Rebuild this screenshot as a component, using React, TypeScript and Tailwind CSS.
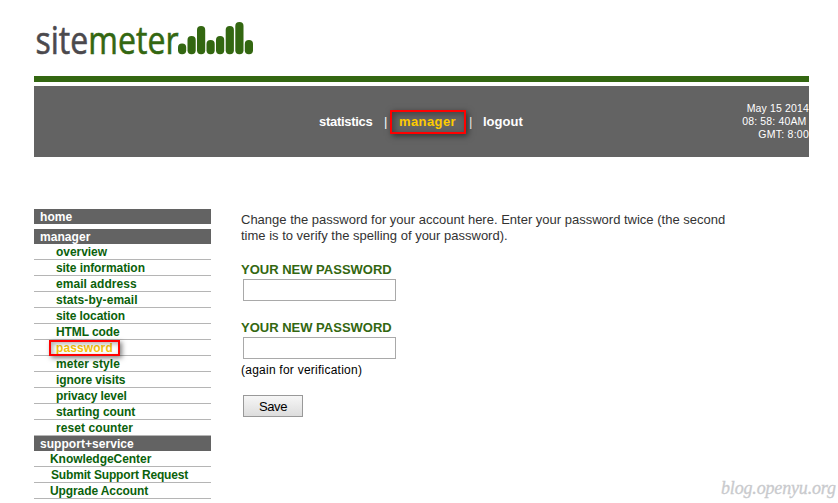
const BARS = [
  { x: 144, top: 25.5 },
  { x: 153.5, top: 18 },
  { x: 163, top: 8 },
  { x: 172.5, top: 22 },
  { x: 182, top: 18 },
  { x: 191.7, top: 8 },
  { x: 201.3, top: 4 },
  { x: 210.8, top: 22 },
];

function Logo() {
  return (
    <svg className="block overflow-visible" width="224" height="46" viewBox="0 0 224 46">
      <text
        x="1.5"
        y="35.7"
        textLength="143"
        lengthAdjust="spacingAndGlyphs"
        fontFamily="'Open Sans', 'Noto Sans', sans-serif"
        fontSize="37.5"
        strokeWidth="0.6"
      >
        <tspan fill="#4b494d" stroke="#4b494d">site</tspan>
        <tspan fill="#336711" stroke="#336711">meter</tspan>
      </text>
      {BARS.map((b) => (
        <rect key={b.x} x={b.x} y={b.top} width="8.2" height={36.2 - b.top} rx="4" fill="#336711" />
      ))}
    </svg>
  );
}

const MANAGER_LINKS = [
  { label: "overview", cls: "tracking-[-0.05px]" },
  { label: "site information", cls: "tracking-[-0.07px]" },
  { label: "email address", cls: "tracking-[0.05px]" },
  { label: "stats-by-email", cls: "tracking-[0.07px]" },
  { label: "site location", cls: "tracking-[-0.08px]" },
  { label: "HTML code", cls: "tracking-[-0.1px]" },
  { label: "password", cls: "tracking-[0.1px]", active: true },
  { label: "meter style", cls: "tracking-[0.05px]" },
  { label: "ignore visits", cls: "tracking-[-0.1px]" },
  { label: "privacy level", cls: "tracking-[-0.1px]" },
  { label: "starting count", cls: "tracking-[-0.05px]" },
  { label: "reset counter", cls: "tracking-[0.08px]" },
];

const SUPPORT_LINKS = [
  { label: "KnowledgeCenter", cls: "pl-4 tracking-[-0.05px]" },
  { label: "Submit Support Request", cls: "pl-[17px] tracking-[-0.16px]" },
  { label: "Upgrade Account", cls: "pl-4 tracking-[-0.1px]" },
];

function SectionTitle({ children }: { children: string }) {
  return (
    <h2 className="h-[15px] bg-[#636363] pl-1.5 text-[12px] leading-4 font-bold tracking-[0.05px] text-white">
      {children}
    </h2>
  );
}

export default function App() {
  return (
    <div className="flex h-[503px] w-[838px] flex-col overflow-hidden bg-white pl-[34px] font-['Liberation_Sans',Arial,sans-serif] text-black">
      <header className="w-[775px]">
        <div className="h-[76px] pt-[18px]"><Logo /></div>
        <div className="mb-1 h-1.5 bg-[#336711]" />
        <div className="flex h-[71px] bg-[#636363] text-white">
          <nav className="flex flex-1 pt-7 pl-[285px] text-[13px] leading-4 font-bold">
            <a className="w-[65px] tracking-[-0.3px]">statistics</a>
            <span className="w-[15px] font-normal">|</span>
            <a className="relative w-[70px] tracking-[0.4px] text-[#ffcc00]">
              manager
              <span className="absolute -top-1 -left-[9px] h-6 w-[76px] border-2 border-[#ff0000] shadow-[2px_2px_6px_rgba(0,0,0,0.5),inset_2px_2px_6px_rgba(0,0,0,0.35)]" />
            </a>
            <span className="w-[14px] font-normal">|</span>
            <a>logout</a>
          </nav>
          <div className="pt-4 text-right text-[10.5px] leading-[13px]">
            <div className="tracking-[0.15px]">May 15 2014</div>
            <div className="pr-[2.5px] tracking-[0.15px]">08: 58: 40AM</div>
            <div className="tracking-[0.25px]">GMT: 8:00</div>
          </div>
        </div>
      </header>

      <div className="flex pt-[52px]">
        <aside className="w-[177px] shrink-0 text-[12px] font-bold text-[#0b610b]">
          <SectionTitle>home</SectionTitle>
          <div className="h-[5px]" />
          <SectionTitle>manager</SectionTitle>
          <ul>
            {MANAGER_LINKS.map((l) => (
              <li key={l.label} className="h-4 border-b border-[#b5b5b5] pl-[22px] leading-4 whitespace-nowrap">
                {l.active ? (
                  <span className="relative text-[#f4c20d]">
                    <span className={l.cls}>{l.label}</span>
                    <span className="absolute -top-px -left-[7px] h-4 w-[71px] border-2 border-[#ff0000] shadow-[2px_2px_5px_rgba(0,0,0,0.5),inset_2px_2px_5px_rgba(0,0,0,0.3)]" />
                  </span>
                ) : (
                  <span className={l.cls}>{l.label}</span>
                )}
              </li>
            ))}
          </ul>
          <SectionTitle>support+service</SectionTitle>
          <ul>
            {SUPPORT_LINKS.map((l) => (
              <li key={l.label} className="h-4 border-b border-[#b5b5b5] leading-4 whitespace-nowrap">
                <span className={l.cls}>{l.label}</span>
              </li>
            ))}
          </ul>
        </aside>

        <main className="flex flex-1 flex-col pt-[3px] pl-[30px] text-[13px] leading-4">
          <p className="whitespace-nowrap text-[#333333]">
            Change the password for your account here. Enter your password twice (the second
            <br />
            time is to verify the spelling of your password).
          </p>
          <label className="mt-[17px] h-[18px] text-[13px] leading-[18px] font-bold text-[#336711]">YOUR NEW PASSWORD</label>
          <input className="ml-0.5 h-[22px] w-[153px] border border-[#a9a9a9] bg-white" />
          <label className="mt-[18px] h-[18px] text-[13px] leading-[18px] font-bold text-[#336711]">YOUR NEW PASSWORD</label>
          <input className="ml-0.5 h-[22px] w-[153px] border border-[#a9a9a9] bg-white" />
          <div className="mt-[3px] text-[12px] tracking-[0.24px]">(again for verification)</div>
          <button className="mt-[17px] ml-0.5 h-[22px] w-[60px] border border-[#999999] bg-linear-to-b from-[#f6f6f6] to-[#dddddd] text-[13px] leading-[21px] tracking-[-0.4px]">
            Save
          </button>
          <div className="mt-[63px] self-end">
            <svg className="block overflow-visible" width="118" height="24" viewBox="0 0 118 24">
              <text
                x="1"
                y="14"
                textLength="115"
                fill="#c9cacd"
                stroke="#c9cacd"
                strokeWidth="0.3"
                fontStyle="italic"
                fontFamily="'Monotype Corsiva', 'Liberation Serif', serif"
                fontSize="18"
              >
                blog.openyu.org
              </text>
            </svg>
          </div>
        </main>
      </div>
    </div>
  );
}
